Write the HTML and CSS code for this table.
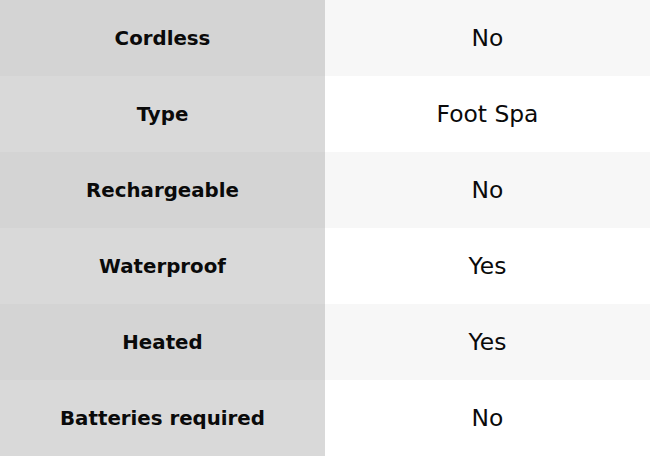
FILE: index.html
```html
<!DOCTYPE html>
<html>
<head>
<meta charset="utf-8">
<link rel="stylesheet" href="styles.css">
</head>
<body>
<div class="specs">
  <div class="row"><div class="label">Cordless</div><div class="value">No</div></div>
  <div class="row"><div class="label">Type</div><div class="value">Foot Spa</div></div>
  <div class="row"><div class="label">Rechargeable</div><div class="value">No</div></div>
  <div class="row"><div class="label">Waterproof</div><div class="value">Yes</div></div>
  <div class="row"><div class="label">Heated</div><div class="value">Yes</div></div>
  <div class="row"><div class="label">Batteries required</div><div class="value">No</div></div>
</div>
</body>
</html>
```
FILE: styles.css
```css
html, body {
  margin: 0;
  padding: 0;
  background: #ffffff;
}
body {
  font-family: "DejaVu Sans", sans-serif;
  color: #0a0a0a;
}
.specs {
  display: flex;
  flex-direction: column;
  width: 650px;
}
.row {
  display: grid;
  grid-template-columns: 325px 325px;
  height: 76px;
}
.label, .value {
  display: flex;
  align-items: center;
  justify-content: center;
}
.label {
  font-weight: bold;
  font-size: 19.8px;
  background: #d9d9d9;
}
.value {
  font-size: 23.4px;
  background: #ffffff;
}
.row:nth-child(odd) .label {
  background: #d4d4d4;
}
.row:nth-child(odd) .value {
  background: #f7f7f7;
}
```
